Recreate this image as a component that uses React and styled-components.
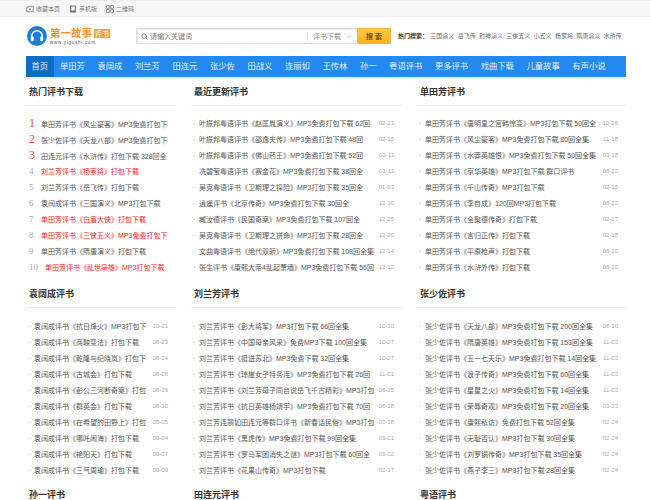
import React from 'react'
import styled, { createGlobalStyle } from 'styled-components'
import { Search, ChevronDown } from 'lucide-react'

const GlobalStyle = createGlobalStyle`
  html, body {
    margin: 0;
    padding: 0;
    overflow: hidden;
    background: #fff;
    font-family: "Liberation Sans", "Noto Sans CJK SC", sans-serif;
  }
`

const navItems = ['单田芳', '袁阔成', '刘兰芳', '田连元', '张少佐', '田战义', '连丽如', '王传林', '孙一', '粤语评书', '更多评书', '戏曲下载', '儿童故事', '有声小说']
const hotWords = ['三国演义', '岳飞传', '封神演义', '三侠五义', '小五义', '杨家将', '隋唐演义', '水浒传']

const hotList = [
  ['单田芳评书《风尘豪客》MP3免费打包下'],
  ['张少佐评书《天龙八部》MP3免费打包下'],
  ['田连元评书《水浒传》打包下载 328回全'],
  ['刘兰芳评书《杨家将》打包下载', true],
  ['刘兰芳评书《岳飞传》打包下载'],
  ['袁阔成评书《三国演义》MP3打包下载'],
  ['单田芳评书《白眉大侠》打包下载', true],
  ['单田芳评书《三侠五义》MP3免费打包下', true],
  ['单田芳评书《隋唐演义》打包下载'],
  ['单田芳评书《乱世枭雄》MP3打包下载', true],
]

const latest = [
  ['叶振邦粤语评书《赵匡胤演义》MP3免费打包下载 62回', '02-21'],
  ['叶振邦粤语评书《邵逸夫传》MP3免费打包下载 48回', '02-15'],
  ['叶振邦粤语评书《佛山药王》MP3免费打包下载 52回', '02-11'],
  ['冼碧莹粤语评书《赛金花》MP3免费打包下载 38回全', '01-11'],
  ['吴克粤语评书《卫斯理之探险》MP3打包下载 35回全', '01-03'],
  ['逍遥评书《北京传奇》MP3免费打包下载 30回全', '12-30'],
  ['臧汝德评书《民国奇案》MP3免费打包下载 107回全', '12-25'],
  ['吴克粤语评书《卫斯理之拼命》MP3打包下载 28回全', '12-20'],
  ['文曲粤语评书《绝代双骄》MP3免费打包下载 108回全集', '12-14'],
  ['张生评书《康熙大帝4乱起萧墙》MP3免费打包下载 56回', '12-12'],
]

const shan = [
  ['单田芳评书《唐明皇之宫韩惊变》MP3打包下载 50回全', '10-26'],
  ['单田芳评书《风尘豪客》MP3免费打包下载 80回全集', '11-18'],
  ['单田芳评书《水莽英雄恨》MP3免费打包下载 50回全集', '03-18'],
  ['单田芳评书《京华英雄》MP3打包下载 群口评书', '08-22'],
  ['单田芳评书《千山传奇》MP3打包下载', '02-15'],
  ['单田芳评书《李自成》120回MP3打包下载', '08-22'],
  ['单田芳评书《全聚德传奇》打包下载', '02-17'],
  ['单田芳评书《言归正传》打包下载', '02-18'],
  ['单田芳评书《平原枪声》打包下载', '08-20'],
  ['单田芳评书《水浒外传》打包下载', '08-20'],
]

const yuan = [
  ['袁阔成评书《抗日烽火》MP3打包下', '10-21'],
  ['袁阔成评书《商鞅变法》打包下载', '08-23'],
  ['袁阔成评书《乾隆与纪晓岚》打包下', '08-24'],
  ['袁阔成评书《古城会》打包下载', '08-28'],
  ['袁阔成评书《彭公三河断奇案》打包', '08-29'],
  ['袁阔成评书《群英会》打包下载', '08-30'],
  ['袁阔成评书《在希望的田野上》打包', '05-05'],
  ['袁阔成评书《哪吒闹海》打包下载', '09-04'],
  ['袁阔成评书《艳阳天》打包下载', '09-07'],
  ['袁阔成评书《三气周瑜》打包下载', '09-09'],
]

const liu = [
  ['刘兰芳评书《彭大将军》MP3打包下载 66回全集', '10-30'],
  ['刘兰芳评书《中国母亲风采》免费MP3下载 100回全集', '10-27'],
  ['刘兰芳评书《挺进苏北》MP3免费下载 32回全集', '10-27'],
  ['刘兰芳评书《琼崖女子特务连》MP3免费打包下载 26回', '11-01'],
  ['刘兰芳评书《刘兰芳母子同台说岳飞千古精彩》MP3打包', '08-25'],
  ['刘兰芳评书《抗日英雄杨靖宇》MP3免费打包下载 70回', '08-28'],
  ['刘兰芳连丽如田连元等群口评书《新春话民俗》MP3打包', '03-18'],
  ['刘兰芳评书《黑虎传》MP3免费打包下载 99回全集', '09-01'],
  ['刘兰芳评书《罗马军团消失之谜》MP3打包下载 60回全', '09-02'],
  ['刘兰芳评书《花果山传奇》MP3打包下载', '02-17'],
]

const zhang = [
  ['张少佐评书《天龙八部》MP3免费打包下载 200回全集', '08-10'],
  ['张少佐评书《隋唐英雄》MP3免费打包下载 153回全集', '11-03'],
  ['张少佐评书《五一七天乐》MP3免费打包下载 14回全集', '11-03'],
  ['张少佐评书《浪子传奇》MP3免费打包下载 60回全集', '11-03'],
  ['张少佐评书《星星之火》MP3免费打包下载 14回全集', '11-03'],
  ['张少佐评书《荣辱奇观》MP3免费打包下载 20回全集', '03-23'],
  ['张少佐评书《康熙私访》免费打包下载 52回全集', '02-24'],
  ['张少佐评书《无耻否认》MP3打包下载 30回全集', '02-24'],
  ['张少佐评书《刘罗锅传奇》MP3打包下载 35回全集', '02-24'],
  ['张少佐评书《燕子李三》MP3打包下载 28回全集', '02-24'],
]

const App = () => {
  return <>
    <GlobalStyle />
    <TopBar>
      <TopInner>
        <TopLink>
          <svg width="8" height="8" viewBox="0 0 16 16" fill="none" stroke="#777" strokeWidth="1.6">
            <path d="M1.5 4.5h3l1-2h9v11h-13z" />
            <path d="M8 10.5 5.8 8.4a1.3 1.3 0 0 1 2.2-1.2 1.3 1.3 0 0 1 2.2 1.2z" fill="#777" stroke="none" />
          </svg>
          收藏本页
        </TopLink>
        <TopLink>
          <svg width="8" height="8" viewBox="0 0 16 16">
            <rect x="2" y="1" width="12" height="14" fill="#777" />
            <rect x="4.5" y="3" width="7" height="8" fill="#f7f7f7" />
          </svg>
          手机版
        </TopLink>
        <TopLink>
          <svg width="8" height="8" viewBox="0 0 16 16" fill="none" stroke="#777" strokeWidth="1.5">
            <rect x="1" y="1" width="6" height="6" rx="1" />
            <rect x="9" y="1" width="6" height="6" rx="1" />
            <rect x="1" y="9" width="6" height="6" rx="1" />
            <rect x="9" y="9" width="6" height="6" rx="1" />
          </svg>
          二维码
        </TopLink>
      </TopInner>
    </TopBar>
    <Page>
      <Header>
        <Logo>
          <svg width="20" height="20" viewBox="0 0 21 21">
            <circle cx="10.5" cy="10.5" r="10.5" fill="#1a7fd4" />
            <path d="M5 12.5v-2a5.5 5.5 0 0 1 11 0v2" fill="none" stroke="#fff" strokeWidth="1.5" />
            <rect x="4" y="11" width="3" height="5" rx="1" fill="#fff" />
            <rect x="14" y="11" width="3" height="5" rx="1" fill="#fff" />
          </svg>
          <LogoText>
            <LogoName>第一故事<LogoBadge>评书</LogoBadge></LogoName>
            <LogoUrl>www.yigushi.com</LogoUrl>
          </LogoText>
        </Logo>
        <SearchBox>
          <SearchField>
            <Search size={7} color="#666" strokeWidth={2.5} />
            <Placeholder>请输入关键词</Placeholder>
            <SearchType>
              评书下载
              <ChevronDown size={7} color="#999" />
            </SearchType>
          </SearchField>
          <SearchButton>搜 索</SearchButton>
        </SearchBox>
        <HotSearch>
          <HotLabel>热门搜索：</HotLabel>
          {hotWords.map((w) => <HotWord key={w}>{w}</HotWord>)}
        </HotSearch>
      </Header>
      <Nav>
        <NavItem $active>首页</NavItem>
        {navItems.map((n) => <NavItem key={n}>{n}</NavItem>)}
      </Nav>
      <Grid>
        <Section>
          <Title>热门评书下载</Title>
          <List>
            {hotList.map(([text, red], i) => (
              <RankRow key={text}>
                <RankNum $top={i < 3} $wide={i === 9}>{i + 1}</RankNum>
                <RankText $red={red}>{text}</RankText>
              </RankRow>
            ))}
          </List>
        </Section>
        <NewsSection title="最近更新评书" rows={latest} />
        <NewsSection title="单田芳评书" rows={shan} />
        <NewsSection title="袁阔成评书" rows={yuan} second />
        <NewsSection title="刘兰芳评书" rows={liu} second />
        <NewsSection title="张少佐评书" rows={zhang} second />
        <Section><Title>孙一评书</Title></Section>
        <Section><Title>田连元评书</Title></Section>
        <Section><Title>粤语评书</Title></Section>
      </Grid>
    </Page>
  </>
}

const NewsSection = ({ title, rows, second }) => (
  <Section>
    <Title>{title}</Title>
    <List $second={second}>
      {rows.map(([text, date]) => (
        <Row key={text}>
          <Dot>·</Dot>
          <RowText>{text}</RowText>
          <RowDate>{date}</RowDate>
        </Row>
      ))}
    </List>
  </Section>
)

const TopBar = styled.div`
  box-sizing: border-box;
  height: 17px;
  background: #f7f7f7;
  border-top: 1px solid #eee;
  border-bottom: 1px solid #eee;
`

const TopInner = styled.div`
  display: flex;
  align-items: center;
  gap: 9px;
  height: 100%;
  margin-left: 26px;
`

const TopLink = styled.a`
  display: flex;
  align-items: center;
  gap: 2px;
  font-size: 6px;
  color: #777;
`

const Page = styled.div`
  width: 600px;
  margin-left: 26px;
`

const Header = styled.header`
  display: flex;
  align-items: flex-start;
  box-sizing: border-box;
  height: 39px;
  padding-top: 9px;
`

const Logo = styled.div`
  display: flex;
  flex: none;
  align-items: center;
  gap: 3px;
  box-sizing: border-box;
  width: 110px;
  padding-left: 1px;
`

const LogoText = styled.div`
  display: flex;
  flex-direction: column;
`

const LogoName = styled.div`
  display: flex;
  align-items: center;
  gap: 2px;
  font-size: 10.5px;
  line-height: 13px;
  font-weight: bold;
  color: #f8922e;
`

const LogoBadge = styled.span`
  padding: 0 1px;
  font-size: 7px;
  line-height: 9px;
  font-weight: normal;
  color: #fff;
  background: #f9a13a;
`

const LogoUrl = styled.div`
  font-size: 4.5px;
  line-height: 6px;
  letter-spacing: 0.75px;
  color: #555;
`

const SearchBox = styled.div`
  display: flex;
  flex: none;
  width: 255px;
  height: 16px;
  margin-top: 2px;
`

const SearchField = styled.div`
  display: flex;
  flex: 1;
  align-items: center;
  padding-left: 4px;
  background: #fff;
  border: 1px solid #ddd;
  border-right: 0;
  box-shadow: inset 1px 1px 1px #e6e6e6;
`

const Placeholder = styled.span`
  flex: 1;
  margin-left: 2px;
  font-size: 7px;
  color: #777;
`

const SearchType = styled.span`
  display: flex;
  align-items: center;
  gap: 5px;
  height: 9px;
  padding: 0 4px 0 5px;
  font-size: 7px;
  color: #888;
  border-left: 1px solid #ddd;
`

const SearchButton = styled.button`
  width: 34px;
  padding: 0;
  font-family: inherit;
  font-size: 7px;
  font-weight: bold;
  color: #7a4a00;
  background: linear-gradient(#fdc94a, #fbb116);
  border: 1px solid #f2b63a;
  border-radius: 1px;
`

const HotSearch = styled.div`
  display: flex;
  flex: none;
  align-items: center;
  gap: 3.3px;
  margin: 5px 0 0 7px;
  white-space: nowrap;
`

const HotLabel = styled.b`
  margin-right: -1px;
  font-size: 6px;
  color: #333;
`

const HotWord = styled.a`
  font-size: 6px;
  color: #666;
`

const Nav = styled.nav`
  display: flex;
  height: 21px;
  background: #2388f0;
  border-bottom: 2px solid #eee;
`

const NavItem = styled.a`
  padding: 0 ${(p) => (p.$active ? 5.5 : 6.3)}px;
  font-size: 8.3px;
  line-height: 21px;
  color: #e4f0ff;
  background: ${(p) => (p.$active ? '#0f6cc4' : 'transparent')};
`

const Grid = styled.main`
  display: grid;
  grid-template-columns: 150px 211px 209px;
  column-gap: 15px;
  row-gap: 4px;
`

const Section = styled.section`
  min-width: 0;
`

const Title = styled.h2`
  height: 26px;
  margin: 0;
  padding-left: 3px;
  font-size: 9px;
  line-height: 26px;
  font-weight: bold;
  color: #333;
  border-bottom: 1px solid #eee;
`

const List = styled.ul`
  margin: 0;
  padding: ${(p) => (p.$second ? '10px 0 0' : '9px 0 2px')};
  list-style: none;
`

const Row = styled.li`
  display: flex;
  align-items: center;
  height: 16px;
  padding: 0 8px 0 2px;
  font-size: 7px;
  color: #555;
`

const Dot = styled.span`
  width: 6px;
  flex: none;
  color: #888;
`

const RowText = styled.span`
  flex: 1;
  min-width: 0;
  white-space: nowrap;
`

const RowDate = styled.span`
  flex: none;
  margin-left: 4px;
  font-size: 6px;
  color: #aaa;
`

const RankRow = styled.li`
  display: flex;
  align-items: baseline;
  height: 16px;
  padding-left: 3px;
  font-size: 7px;
  line-height: 16px;
`

const RankNum = styled.span`
  flex: none;
  width: ${(p) => (p.$wide ? 16 : 12)}px;
  font-family: "Liberation Serif", serif;
  font-size: ${(p) => (p.$top ? 12 : 9)}px;
  color: ${(p) => (p.$top ? '#f04a4a' : '#aaa')};
`

const RankText = styled.span`
  flex: 1;
  min-width: 0;
  white-space: nowrap;
  color: ${(p) => (p.$red ? '#f22' : '#555')};
`

export default App
